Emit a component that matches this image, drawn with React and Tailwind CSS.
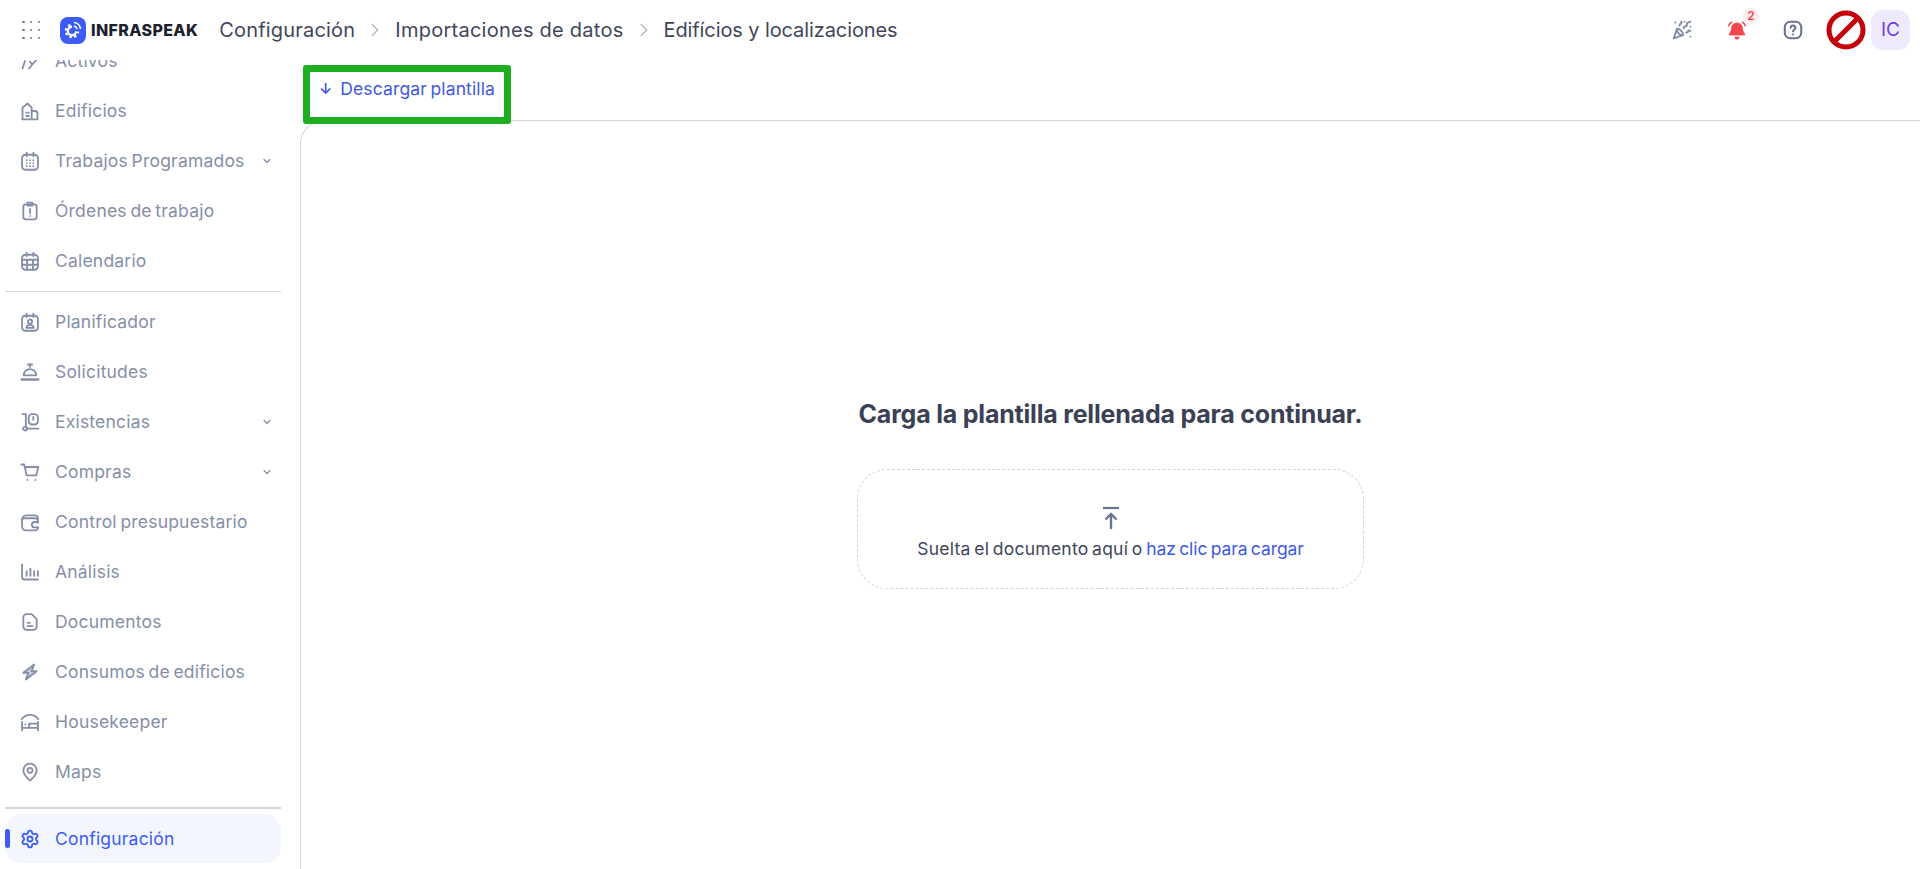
import { ChevronDown, ChevronRight, MapPin, Settings, PartyPopper } from 'lucide-react';

const bodyText = 'text-[17.5px] tracking-[0.2px] [word-spacing:-1.5px]';

const Svg = ({ children, size = 20 }) => (
  <svg width={size} height={size} viewBox="0 0 24 24" fill="none" stroke="currentColor" strokeWidth="2.2" strokeLinecap="round" strokeLinejoin="round">
    {children}
  </svg>
);

const ActivosIcon = () => (
  <Svg>
    <path d="M3 21l3-9M3 5h4l3 4" />
    <path d="M12 13l3 3 6-7v-2" />
    <path d="M11 21l3-4" />
  </Svg>
);
const BuildingIcon = () => (
  <Svg>
    <path d="M3 22V8l6-5 5 5v14" />
    <path d="M14 12h4a3 3 0 0 1 3 3v7H3" />
    <path d="M7.500 14h3M7.500 18h3" />
  </Svg>
);
const ScheduledIcon = () => (
  <Svg>
    <rect x="2.500" y="4.500" width="19" height="18" rx="4" />
    <path d="M8 2v4M16 2v4" />
    <path d="M8 11h.01M12 11h.01M16 11h.01M8 14.500h.01M12 14.500h.01M16 14.500h.01M8 18h.01M12 18h.01M16 18h.01" />
  </Svg>
);
const WorkOrderIcon = () => (
  <Svg>
    <rect x="4" y="4" width="16" height="18" rx="3" />
    <path d="M9 2h6v3.500H9zM12 9.500v5M12 18h.01" />
  </Svg>
);
const CalendarIcon = () => (
  <Svg>
    <rect x="2.500" y="4.500" width="19" height="18" rx="4" />
    <path d="M8 2v4M16 2v4M2.500 10.500h19M2.500 16.500h19M8.500 10.500v12M15.500 10.500v12" />
  </Svg>
);
const PlannerIcon = () => (
  <Svg>
    <rect x="2.500" y="4.500" width="19" height="18" rx="4" />
    <path d="M8 2v4M16 2v4" />
    <circle cx="12" cy="11.500" r="2.500" />
    <path d="M7.500 19c.5-2.300 2.200-3.500 4.500-3.500s4 1.200 4.500 3.500z" />
  </Svg>
);
const BellDeskIcon = () => (
  <Svg>
    <path d="M12 3v3M9.500 3h5" />
    <path d="M4.500 16a7.500 7.500 0 0 1 15 0z" />
    <path d="M2 21h20" strokeWidth="2.800" />
  </Svg>
);
const StockIcon = () => (
  <Svg>
    <path d="M3 2.500h4v15" />
    <circle cx="6" cy="20" r="2.200" />
    <path d="M8.500 20H22" />
    <rect x="10.500" y="2.500" width="11" height="12.500" rx="4" />
    <path d="M16 6v3.500" />
  </Svg>
);
const CartIcon = () => (
  <Svg>
    <path d="M1.500 3h3.500l3 13h11.500l2.500-10H6" />
    <path d="M9 21.500h.01M18.500 21.500h.01" />
  </Svg>
);
const WalletIcon = () => (
  <Svg>
    <path d="M21.500 9V7.500a3.500 3.500 0 0 0-3.500-3.500H8C5 4 2.500 6 2.500 9v8.500A4.500 4.500 0 0 0 7 22h11a3.500 3.500 0 0 0 3.500-3.500" />
    <path d="M2.500 10a3 3 0 0 1 3-2.500H18a3.500 3.500 0 0 1 3.500 3.500v2" />
    <path d="M21.500 12h-4a3 3 0 0 0 0 6.500h4" />
  </Svg>
);
const ChartIcon = () => (
  <Svg>
    <path d="M2.500 3v15a3 3 0 0 0 3 3h16" />
    <path d="M8 11v5.500M12.500 8v8.500M17 11v5.500M21.500 11v5.500" />
  </Svg>
);
const DocIcon = () => (
  <Svg>
    <path d="M14 2.500H8a4 4 0 0 0-4 4v11a4 4 0 0 0 4 4h8a4 4 0 0 0 4-4V8.500z" />
    <path d="M9 13h3M9 17h6" />
  </Svg>
);
const BoltIcon = () => (
  <Svg>
    <path d="M17 3L4 13h6l-3 8 13-10h-6z" fill="currentColor" fillOpacity=".45" />
  </Svg>
);
const BedIcon = () => (
  <Svg>
    <path d="M2 8.500C5 5 8 3.500 12 3.500s7 1.500 10 5" />
    <path d="M2.500 22V12M21.500 22V12M2.500 19h19" />
    <path d="M11 19v-5h10.500" />
    <path d="M6.500 15h.01" />
  </Svg>
);
const PinIcon = () => <MapPin size={20} strokeWidth={2.2} />;

const items = [
  { label: 'Edificios', Icon: BuildingIcon },
  { label: 'Trabajos Programados', Icon: ScheduledIcon, caret: true },
  { label: 'Órdenes de trabajo', Icon: WorkOrderIcon },
  { label: 'Calendario', Icon: CalendarIcon },
  { divider: true },
  { label: 'Planificador', Icon: PlannerIcon },
  { label: 'Solicitudes', Icon: BellDeskIcon },
  { label: 'Existencias', Icon: StockIcon, caret: true },
  { label: 'Compras', Icon: CartIcon, caret: true },
  { label: 'Control presupuestario', Icon: WalletIcon },
  { label: 'Análisis', Icon: ChartIcon },
  { label: 'Documentos', Icon: DocIcon },
  { label: 'Consumos de edificios', Icon: BoltIcon },
  { label: 'Housekeeper', Icon: BedIcon },
  { label: 'Maps', Icon: PinIcon },
];

const NavItem = ({ label, Icon, caret }) => (
  <div className="flex h-[50px] items-center pl-[20px] pr-[8px] text-[#868ea9]">
    <span className="flex w-[20px] justify-center">
      <Icon />
    </span>
    <span className={`ml-[15px] flex-1 ${bodyText}`}>{label}</span>
    {caret && <ChevronDown size={12} strokeWidth={2.5} />}
  </div>
);

const Logo = () => (
  <div className="flex items-center">
    <div className="flex h-[27px] w-[26px] items-center justify-center rounded-[8px] bg-[#3d5cf5]">
      <svg width="20" height="20" viewBox="0 0 20 20" fill="none" stroke="#fff">
        <circle cx="9" cy="11" r="4.200" strokeWidth="2.400" />
        <circle cx="9" cy="11" r="6.300" strokeWidth="2" strokeDasharray="2.500 2.450" />
        <path d="M9 11V1h11v11z" fill="#3d5cf5" stroke="none" />
        <path d="M11 2.500a7 7 0 0 1 6.500 6.500M11 6a4 4 0 0 1 3 3" strokeWidth="1.600" />
      </svg>
    </div>
    <span className="ml-[5px] text-[16px] font-extrabold tracking-[0.35px] text-[#1c2130]">INFRASPEAK</span>
  </div>
);

const Topbar = () => (
  <header className="flex h-[60px] shrink-0 items-center bg-white pl-[22px] pr-[10px] text-[#3f465b]">
    <div className="grid w-[18px] grid-cols-3 gap-[5.5px]">
      {Array.from({ length: 9 }).map((_, i) => (
        <span key={i} className="h-[2.5px] w-[2.5px] rounded-full bg-[#6b7391]" />
      ))}
    </div>
    <div className="ml-[20px]">
      <Logo />
    </div>
    <nav className="ml-[21px] flex items-center text-[20px]">
      <span className="tracking-[0.2px]">Configuración</span>
      <ChevronRight size={22} strokeWidth={1.5} className="mx-[9px] text-[#b5b8c2]" />
      <span className="tracking-[0.25px]">Importaciones de datos</span>
      <ChevronRight size={22} strokeWidth={1.5} className="mx-[9px] text-[#b5b8c2]" />
      <span className="tracking-[-0.1px]">Edifícios y localizaciones</span>
    </nav>
    <div className="ml-auto flex items-center">
      <PartyPopper size={20} strokeWidth={2.2} className="text-[#7f88a5]" />
      <div className="relative ml-[35px]">
        <svg width="20" height="20" viewBox="0 0 24 24" fill="#f4464f" stroke="#f4464f">
          <path d="M12 3.500a6.500 6.500 0 0 0-6.500 6.500c0 4.500-3 5.500-3 8h19c0-2.500-3-3.500-3-8A6.500 6.500 0 0 0 12 3.500zM9.500 20.500a2.500 2.500 0 0 0 5 0z" />
          <path d="M5.500 2.500A8 8 0 0 0 2 7M18.500 2.500A8 8 0 0 1 22 7" fill="none" strokeWidth="1.800" strokeLinecap="round" />
        </svg>
        <span className="absolute -right-[12px] -top-[12px] flex h-[16px] w-[16px] items-center justify-center rounded-full bg-[#fdecec] text-[12px] font-semibold text-[#f4464f]">2</span>
      </div>
      <svg width="22" height="22" viewBox="0 0 24 24" fill="none" stroke="#68718f" strokeWidth="2.200" strokeLinecap="round" strokeLinejoin="round" className="ml-[35px]">
        <rect x="3" y="3" width="18" height="18" rx="6" />
        <path d="M9.500 9.500a2.500 2.500 0 0 1 5 .3c0 1.700-2.500 2-2.500 3.700M12 16.800h.01" />
      </svg>
      <svg width="40" height="40" viewBox="0 0 40 40" fill="none" stroke="#c40008" strokeWidth="5" className="ml-[22px]">
        <circle cx="20" cy="20" r="17" />
        <path d="M8 32L32 8" />
      </svg>
      <div className="ml-[5px] flex h-[40px] w-[39px] items-center justify-center rounded-[12px] bg-[#efe9fd] text-[19px] text-[#6d3fe0]">IC</div>
    </div>
  </header>
);

const Sidebar = () => (
  <aside className="flex w-[300px] shrink-0 flex-col overflow-hidden bg-white">
    <div className="w-[281px]">
      <div className="-mt-[24px]">
        <NavItem label="Activos" Icon={ActivosIcon} />
        {items.map((item, i) =>
          item.divider ? (
            <div key={i} className="ml-[5px] my-[5px] border-t border-[#d4d5da]" />
          ) : (
            <NavItem key={i} {...item} />
          )
        )}
      </div>
      <div className="ml-[5px] mt-[10px] border-t-2 border-[#d4d5da]" />
      <div className="relative ml-[5px] mt-[5px] flex h-[49px] items-center rounded-[16px] bg-[#f3f6fe] pl-[15px] pt-[1px] text-[#3d5cf5]">
        <span className="absolute left-0 top-[15px] h-[19px] w-[5px] rounded-full bg-[#3d5cf5]" />
        <Settings size={20} strokeWidth={2.2} />
        <span className={`ml-[15px] ${bodyText}`}>Configuración</span>
      </div>
    </div>
  </aside>
);

const Dropzone = () => (
  <div className="flex h-[120px] w-[507px] flex-col items-center justify-center rounded-[30px] border border-dashed border-[#d3d4d8] pt-[9px]">
    <svg width="20" height="24" viewBox="0 0 20 24" fill="none" stroke="#69748f" strokeWidth="2.4" className="mt-[3px]">
      <path d="M2 2h16" strokeWidth="2.2" />
      <path d="M10 23V8M4.500 13.500L10 8l5.500 5.500" />
    </svg>
    <p className="mt-[6px] text-[17.5px] tracking-[0.24px] text-[#3f465b] [word-spacing:-1.5px]">
      Suelta el documento aquí o <span className="tracking-[-0.08px] text-[#4059e0]">haz clic para cargar</span>
    </p>
  </div>
);

export default function App() {
  return (
    <div className="flex h-screen flex-col overflow-hidden bg-white font-['Inter','Liberation_Sans',sans-serif]">
      <Topbar />
      <div className="flex min-h-0 flex-1">
        <Sidebar />
        <main className="flex min-w-0 flex-1 flex-col">
          <div className="h-[60px] shrink-0">
            <a className="relative z-10 ml-[3px] mt-[5px] flex h-[59px] w-[208px] items-center rounded-[3px] border-[7px] border-[#1fae1f] pb-[10px] pl-[9px] text-[#4059e0]">
              <span className="text-[15px] font-semibold">↓</span>
              <span className={`ml-[8px] ${bodyText} tracking-[0.13px]`}>Descargar plantilla</span>
            </a>
          </div>
          <div className="flex flex-1 flex-col items-center rounded-tl-[24px] border-l border-t border-[#d4d5da]">
            <h1 className="mt-[275px] text-[25px] font-bold tracking-[-0.2px] text-[#3a4155]">Carga la plantilla rellenada para continuar.</h1>
            <div className="mt-[35px]">
              <Dropzone />
            </div>
          </div>
        </main>
      </div>
    </div>
  );
}
